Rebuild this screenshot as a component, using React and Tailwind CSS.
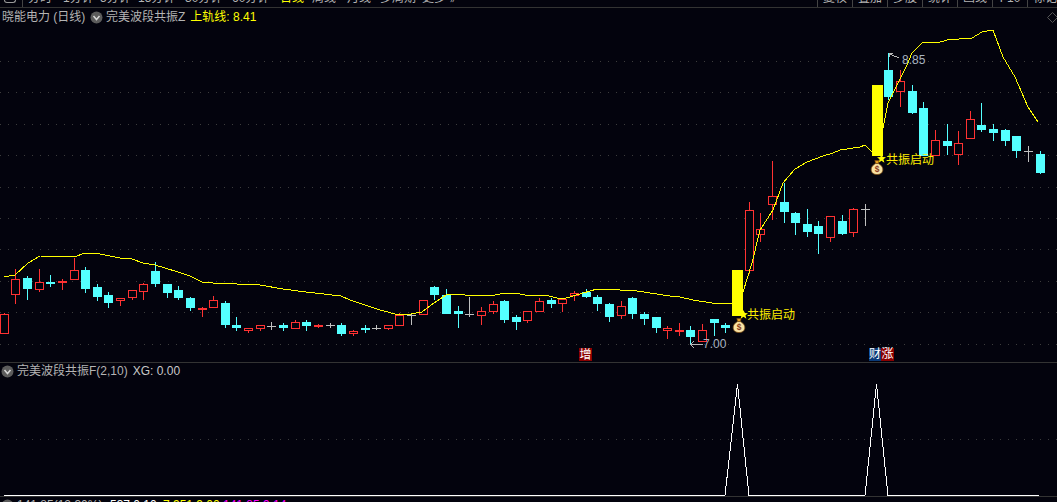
const BG = "#03030d";
const RED = "#ff3232";
const CYAN = "#54ffff";
const GRAY = "#c0c0c0";

// type, wick top, body top, body bottom, wick bottom
const CANDLES = [
  ["r",313,314,334,334],["r",269,279,295,304],["c",276,278,289,300],["r",269,282,290,292],["c",275,282,284,287],
  ["f",279,281,283,290],["r",258,270,280,280],["c",267,270,289,293],["c",284,287,297,301],["c",292,295,303,308],
  ["r",298,298,301,306],["r",290,290,298,300],["r",283,284,292,300],["c",262,271,284,287],["c",284,284,293,298],
  ["c",286,290,298,300],["c",297,298,308,311],["f",307,308,310,317],["r",296,300,308,308],["c",301,303,325,328],
  ["c",317,325,328,331],["r",328,328,331,333],["r",325,325,329,331],["g",322,326,326,330],["c",323,325,328,331],
  ["r",320,322,329,329],["c",320,322,326,331],["f",324,325,327,328],["g",323,325,325,328],["c",323,325,334,336],
  ["r",330,331,334,336],["c",325,328,330,333],["g",325,328,328,330],["r",325,325,329,330],["r",313,315,326,326],
  ["g",313,315,315,325],["r",300,300,315,315],["c",286,287,295,300],["c",289,295,314,314],["c",306,311,314,328],
  ["g",297,314,314,317],["r",307,311,316,325],["r",301,304,312,314],["c",300,301,320,323],["c",315,317,322,330],
  ["r",311,311,321,323],["r",298,301,312,312],["c",298,300,304,308],["r",298,299,304,312],["r",291,293,296,301],
  ["c",289,292,297,298],["c",295,297,304,311],["c",303,304,317,322],["r",301,306,316,319],["c",297,298,314,319],
  ["c",312,314,319,325],["c",317,317,328,333],["r",326,328,331,339],["f",323,330,332,336],["c",326,330,337,344],
  ["r",324,330,342,342],["c",319,319,323,336],["c",323,325,328,333],["y",269,270,316,316],["r",202,210,271,274],
  ["r",213,229,235,242],["r",161,196,205,220],["c",183,202,212,223],["c",212,213,223,235],["c",209,224,232,237],
  ["c",221,226,234,254],["r",216,216,238,242],["c",215,221,234,235],["r",208,209,233,237],["g",204,209,209,226],
  ["y",85,85,156,156],["c",53,70,97,100],["r",70,81,92,107],["c",85,91,113,114],["c",102,108,156,156],
  ["r",130,140,156,156],["c",124,141,146,155],["r",131,143,155,165],["r",111,119,139,139],["c",103,125,130,132],
  ["c",124,129,133,141],["c",129,130,141,146],["c",136,136,151,158],["g",146,151,151,162],["c",151,154,173,174],
];

const LINE = "4,277 15,275 28,263 40,256 74,257 85,253 100,254 120,258 132,259 143,263 155,265 178,272 190,276 202,282 213,283 260,285 283,289 306,292 341,296 350,300 365,305 380,310 399,315 411,314 422,312 434,303 446,295 462,294 465,295 495,295 505,293 520,294 530,296 545,295 557,298 563,299 573,296 583,293 597,289 611,289 620,290 637,291 650,293 670,296 680,297 693,300 712,303 732,304 743,292 752,263 760,230 773,210 783,183 795,169 807,162 823,156 833,153 840,150 860,147 865,145 872,152 882,133 888,103 893,93 907,65 912,53 923,42 937,43 947,40 972,38 982,32 993,30 1003,57 1015,77 1028,107 1038,122";
const GRID_MAIN = [61, 92, 124, 155, 187, 218, 249, 281, 312, 344];

function Candle({ c, i }) {
  const [t, w1, b1, b2, w2] = c;
  const x = Math.round(3.66 + 11.64 * i);
  if (t === "y") return <rect x={x - 5} y={b1} width={11} height={b2 - b1} fill="#ffff00" />;
  if (t === "g")
    return (
      <g stroke={GRAY}>
        <line x1={x + 0.5} x2={x + 0.5} y1={w1} y2={w2} />
        <line x1={x - 4} x2={x + 5} y1={b1 + 0.5} y2={b1 + 0.5} />
      </g>
    );
  const col = t === "c" ? CYAN : RED;
  return (
    <g>
      <line x1={x + 0.5} x2={x + 0.5} y1={w1} y2={w2} stroke={col} />
      {t === "r" ? (
        <rect x={x - 3.5} y={b1 + 0.5} width={8} height={Math.max(b2 - b1 - 1, 1)} fill={BG} stroke={col} />
      ) : (
        <rect x={x - 4} y={b1} width={9} height={Math.max(b2 - b1, 1)} fill={col} />
      )}
    </g>
  );
}

function CircleChevron() {
  return (
    <svg width="13" height="13" viewBox="0 0 13 13" className="shrink-0">
      <circle cx="6.5" cy="6.5" r="6" fill="#5c5c5c" />
      <path d="M3.5 5 L6.5 8.5 L9.5 5" fill="none" stroke="#d8d8d8" strokeWidth="1.5" />
    </svg>
  );
}

function Bag({ className }) {
  return (
    <svg width="14" height="15" viewBox="0 0 15 17" className={className}>
      <path d="M5 0.5 H10 L9 4 H6 Z" fill="#e8a020" stroke="#7a4a10" strokeWidth="0.7" />
      <path d="M6 4 H9 C13 6 14.5 9 14 12 C13.5 15 11 16.5 7.5 16.5 C4 16.5 1.5 15 1 12 C0.5 9 2 6 6 4 Z" fill="#f8e2a4" stroke="#7a4a10" strokeWidth="0.9" />
      <text x="7.5" y="14" textAnchor="middle" fontSize="9.5" fontWeight="700" fontFamily="Liberation Sans" fill="#8a3a20">$</text>
    </svg>
  );
}

function Star({ className }) {
  return (
    <svg width="9" height="9" viewBox="0 0 10 10" className={className}>
      <polygon points="5,0 6.4,3.4 10,3.6 7.2,5.9 8.2,9.6 5,7.6 1.8,9.6 2.8,5.9 0,3.6 3.6,3.4" fill="#ffff00" />
    </svg>
  );
}

export default function App() {
  return (
    <div className="flex h-[502px] w-[1057px] flex-col overflow-hidden bg-[#03030d] font-['Liberation_Sans','Noto_Sans_CJK_SC',sans-serif] text-xs text-[#b4b4b4]">
      {/* toolbar, cut off by the window's top edge */}
      <div className="flex h-[8px] shrink-0 items-end overflow-hidden border-b border-[#333333] leading-[12px]">
        <div className="flex h-[7px] w-[23px] shrink-0 items-start border-r border-[#444444] pl-[4px]">
          <div className="h-[3px] w-[12px] rounded-b-sm border-x border-b border-[#999999]" />
        </div>
        <div className="flex items-end whitespace-nowrap pb-[3px]">
          <span className="ml-[5px] w-[35px] shrink-0">分时</span>
          <span className="w-[37px] shrink-0">1分钟</span>
          <span className="w-[38px] shrink-0">5分钟</span>
          <span className="w-[47px] shrink-0">15分钟</span>
          <span className="w-[47px] shrink-0">30分钟</span>
          <span className="w-[48px] shrink-0">60分钟</span>
          <span className="w-[32px] shrink-0 text-[#ffff00]">日线</span>
          <span className="w-[35px] shrink-0">周线</span>
          <span className="w-[33px] shrink-0">月线</span>
          <span className="w-[42px] shrink-0">多周期</span>
          <span className="w-[28px] shrink-0">更多</span>
          <span className="shrink-0">》</span>
        </div>
        <div className="ml-auto flex h-[7px] w-[240px] shrink-0 items-end text-center">
          {["复权", "叠加", "多股", "统计", "画线", "F10", "标记"].map((t) => (
            <div key={t} className="flex h-[7px] w-[35px] shrink-0 items-end justify-center border-l border-[#444444] pb-[3px] whitespace-nowrap">
              {t}
            </div>
          ))}
        </div>
      </div>

      {/* main pane */}
      <div className="flex h-[355px] shrink-0 flex-col border-b border-[#333333]">
        <div className="flex h-[18px] shrink-0 items-center whitespace-nowrap">
          <span className="ml-[2px] w-[88px] shrink-0">晓能电力 (日线)</span>
          <CircleChevron />
          <span className="ml-[3px]">完美波段共振Z</span>
          <span className="ml-[5px] text-[#ffff00]">上轨线: 8.41</span>
          <svg width="11" height="11" viewBox="0 0 11 11" className="ml-auto mr-[-1px] shrink-0">
            <path d="M5.5 0.5 L10.5 5.5 L5.5 10.5 L0.5 5.5 Z" fill="none" stroke="#555555" />
          </svg>
        </div>
        <div className="relative h-[336px] shrink-0">
          <svg width="1057" height="336" viewBox="0 26 1057 336" shapeRendering="crispEdges" className="block">
            {GRID_MAIN.map((y) => (
              <line key={y} x1="0" x2="1057" y1={y + 0.5} y2={y + 0.5} stroke="#3c3c3c" strokeDasharray="1 7" />
            ))}
            {CANDLES.map((c, i) => c[0] !== "y" && <Candle key={i} c={c} i={i} />)}
            <polyline points={LINE} fill="none" stroke="#ffff00" />
            {CANDLES.map((c, i) => c[0] === "y" && <Candle key={i} c={c} i={i} />)}
            <g fill="none" stroke="#b8b8b8">
              <path d="M889 57 V53.5 H893 M889.5 54 L899 58" />
              <path d="M703 344.5 H691 M694 341 L691 344.5 L694 348" />
            </g>
          </svg>

          <span className="absolute left-[902px] top-[27px] leading-[14px] text-[#a8b4c0]">8.85</span>
          <span className="absolute left-[703px] top-[311px] leading-[14px] text-[#a8b4c0]">7.00</span>

          <Star className="absolute left-[739px] top-[284px]" />
          <span className="absolute left-[747px] top-[282px] whitespace-nowrap leading-[14px] text-[#ffee00]">共振启动</span>
          <Bag className="absolute left-[732px] top-[292px]" />

          <Star className="absolute left-[877px] top-[128px]" />
          <span className="absolute left-[886px] top-[127px] whitespace-nowrap leading-[14px] text-[#ffee00]">共振启动</span>
          <Bag className="absolute left-[870px] top-[134px]" />

          <span className="absolute left-[579px] top-[322px] flex h-[13px] w-[13px] items-center justify-center bg-[#8b0000] text-white">增</span>
          <span className="absolute left-[869px] top-[322px] flex h-[13px] whitespace-nowrap leading-[13px] text-white">
            <span className="w-[12px] bg-[#0a3a78] text-center">财</span>
            <span className="w-[13px] bg-[#8b0000] text-center">涨</span>
          </span>
        </div>
      </div>

      {/* indicator pane */}
      <div className="flex h-[134px] shrink-0 flex-col border-b border-[#333333]">
        <div className="flex h-[16px] shrink-0 items-center whitespace-nowrap pl-px">
          <CircleChevron />
          <span className="ml-[3px]">完美波段共振F(2,10)</span>
          <span className="ml-[5px] text-[#c8c8c8]">XG: 0.00</span>
        </div>
        <svg width="1057" height="118" viewBox="0 379 1057 118" shapeRendering="crispEdges" className="block shrink-0">
          <line x1="0" x2="1057" y1="439.5" y2="439.5" stroke="#3c3c3c" strokeDasharray="1 7" />
          <polyline
            points="4,495.5 725,495.5 737.5,384 749,495.5 865,495.5 876.5,384 888,495.5 1039,495.5"
            fill="none"
            stroke="#ffffff"
          />
        </svg>
      </div>

      {/* status row, cut off by the window's bottom edge */}
      <div className="flex shrink-0 items-start whitespace-nowrap pt-[1px] leading-[12px]">
        <div className="ml-[1px] mt-[1px] shrink-0"><CircleChevron /></div>
        <span className="ml-[3px] w-[93px] shrink-0 pt-[1px]">141.85(12.30%)</span>
        <span className="w-[53px] shrink-0 pt-[1px] text-white">537 0.10</span>
        <span className="w-[60px] shrink-0 pt-[1px] text-[#ffff00]">7.951 9.00</span>
        <span className="shrink-0 pt-[1px] text-[#ff00ff]">141.85 9.14</span>
      </div>
    </div>
  );
}
